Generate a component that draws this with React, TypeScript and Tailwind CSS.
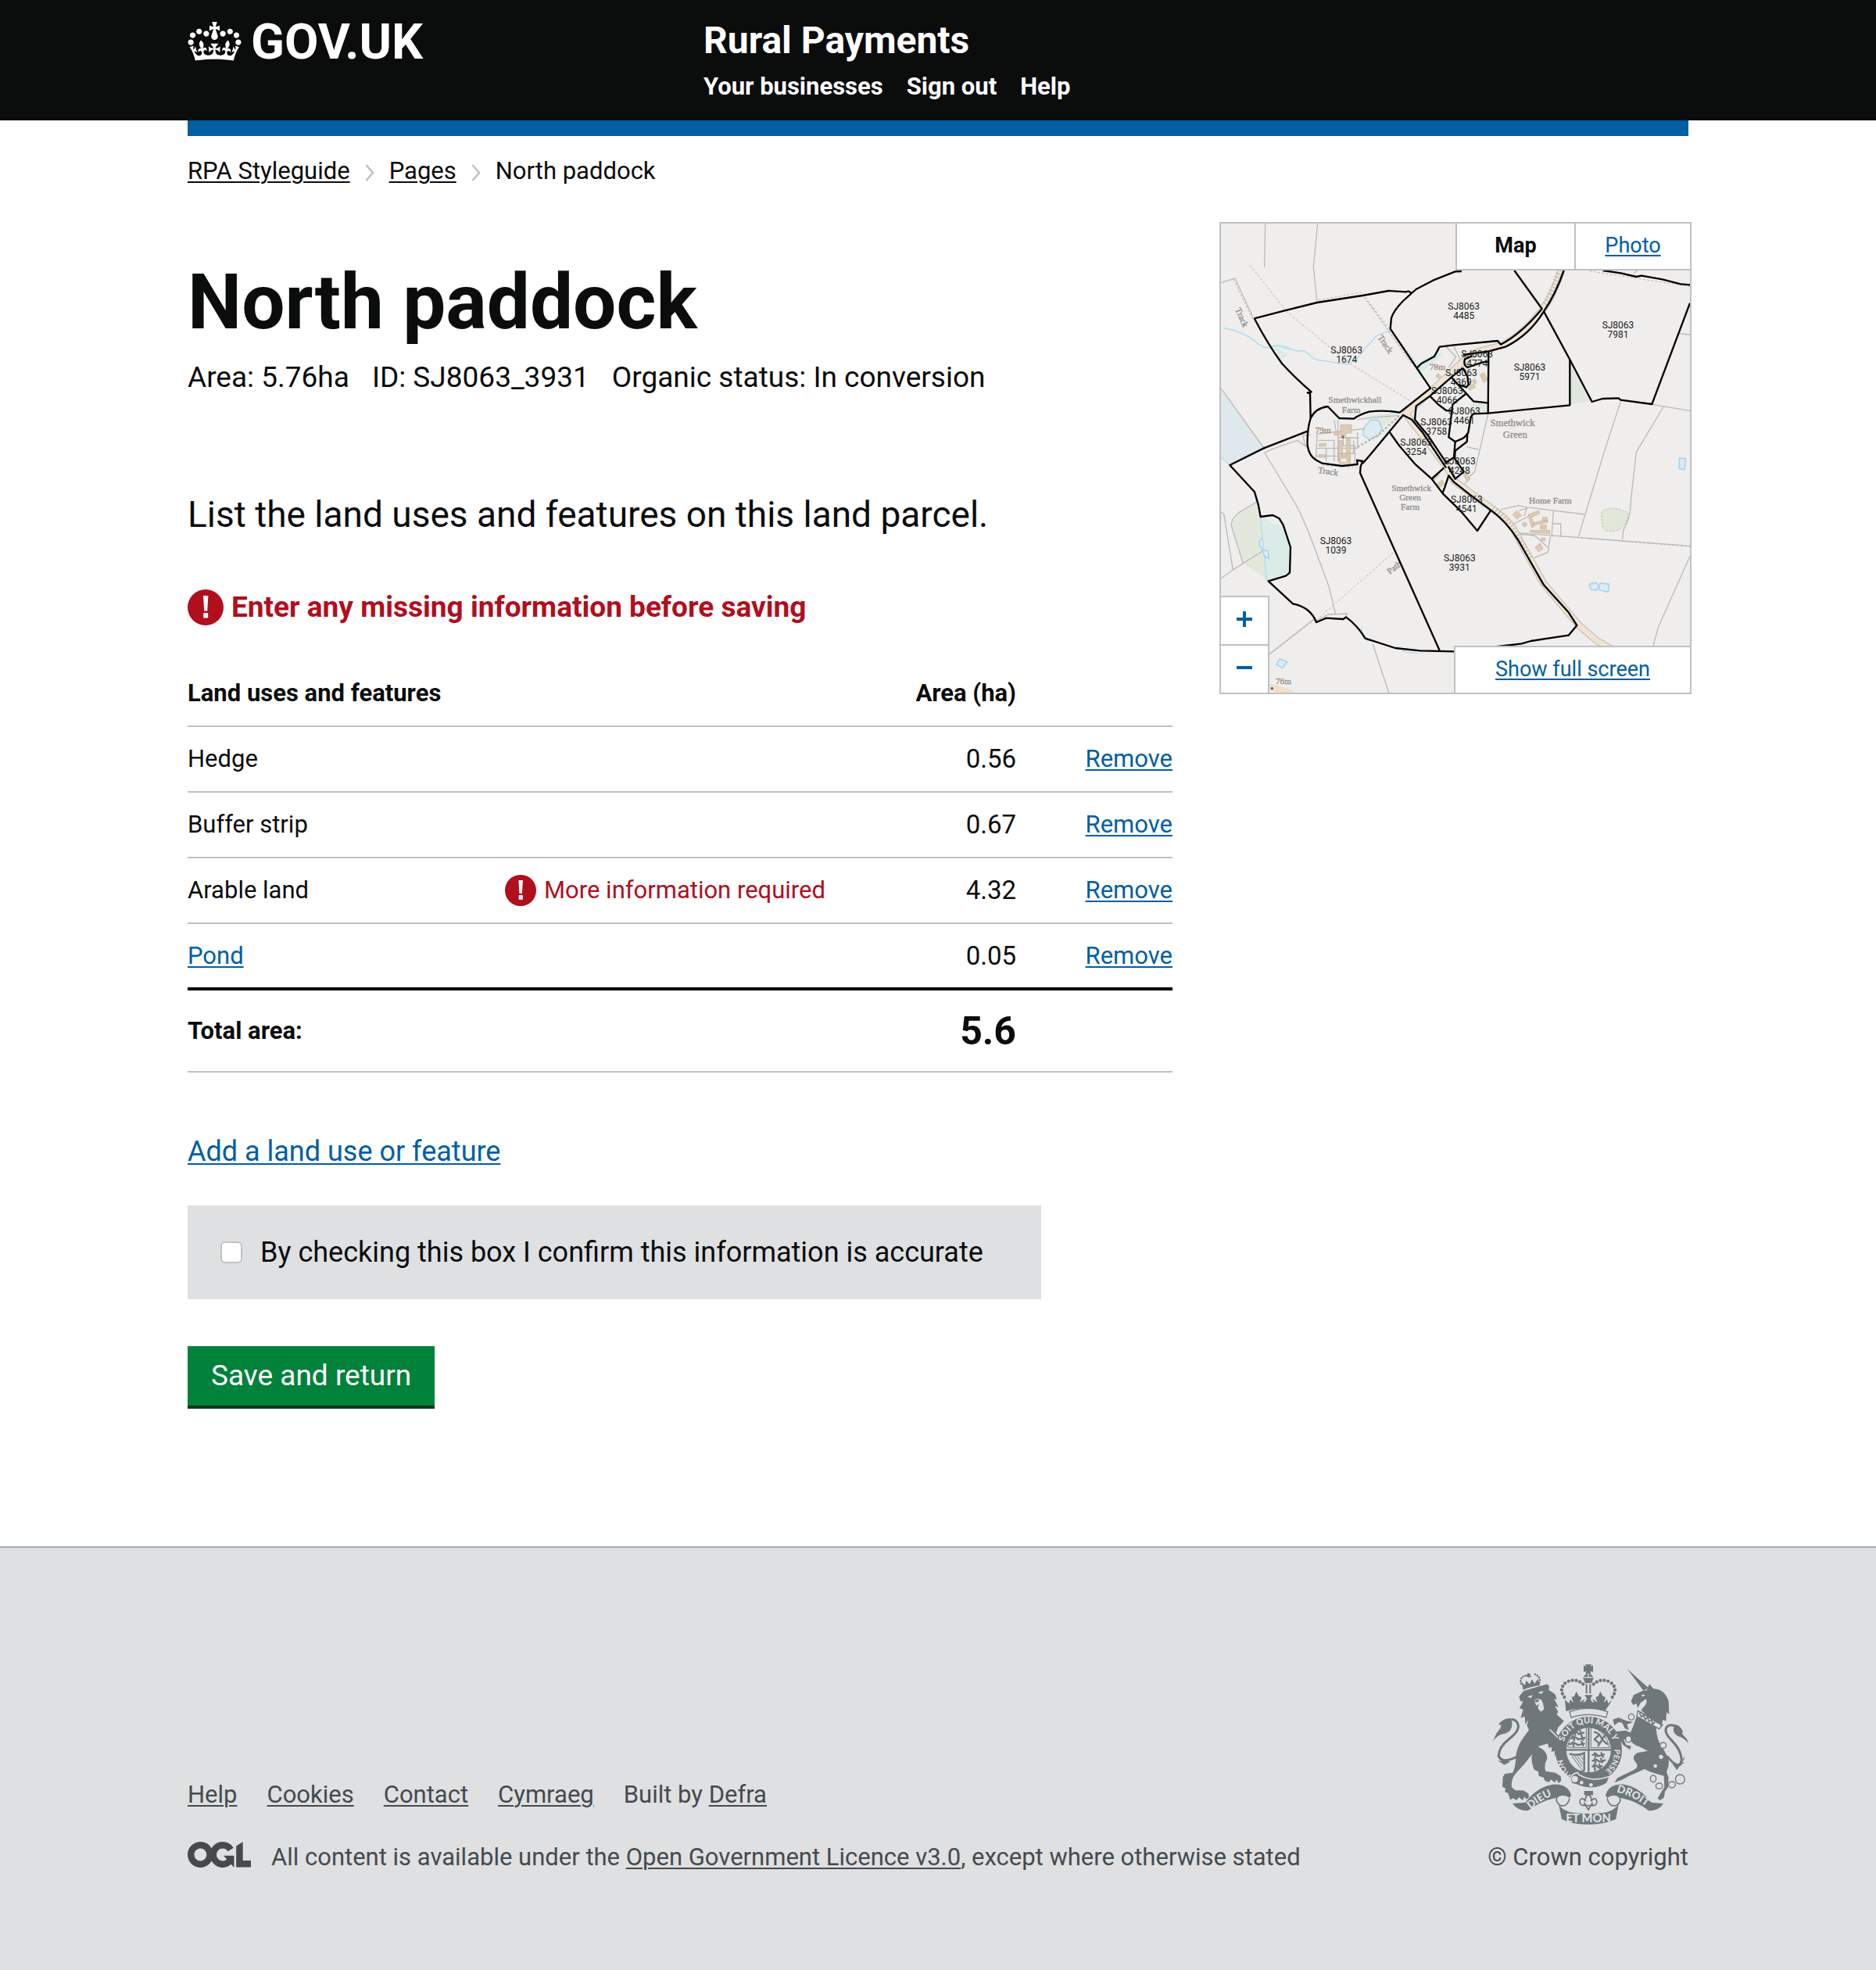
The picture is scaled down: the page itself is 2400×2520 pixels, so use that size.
import React from "react";

const UNDERLINE = "underline decoration-2 underline-offset-[3px]";
const LINK = "text-[#005ea5] underline decoration-2 underline-offset-[3px]";

const CROWN =
  "M25 30.2c3.5 1.5 7.7-.2 9.1-3.7 1.5-3.6-.2-7.8-3.9-9.2-3.6-1.4-7.6.3-9.1 3.9-1.4 3.5.3 7.5 3.9 9zM9 39.5c3.6 1.5 7.8-.2 9.2-3.7 1.5-3.6-.2-7.8-3.9-9.1-3.6-1.5-7.6.2-9.1 3.8-1.4 3.5.3 7.5 3.8 9zM4.4 57.2c3.5 1.5 7.7-.2 9.1-3.8 1.5-3.6-.2-7.7-3.9-9.1-3.5-1.5-7.6.3-9.1 3.8-1.4 3.5.3 7.6 3.9 9.1zm38.3-21.4c3.5 1.5 7.7-.2 9.1-3.8 1.5-3.6-.2-7.7-3.9-9.1-3.6-1.5-7.6.3-9.1 3.8-1.3 3.6.4 7.7 3.9 9.1zm64.4-5.6c-3.6 1.5-7.8-.2-9.1-3.7-1.5-3.6.2-7.8 3.8-9.2 3.6-1.4 7.7.3 9.2 3.9 1.3 3.5-.4 7.5-3.9 9zm15.9 9.3c-3.6 1.5-7.7-.2-9.1-3.7-1.5-3.6.2-7.8 3.7-9.1 3.6-1.5 7.7.2 9.2 3.8 1.5 3.5-.3 7.5-3.8 9zm4.7 17.7c-3.6 1.5-7.8-.2-9.2-3.8-1.5-3.6.2-7.7 3.9-9.1 3.6-1.5 7.7.3 9.2 3.8 1.3 3.5-.4 7.6-3.9 9.1zM89.3 35.8c-3.6 1.5-7.8-.2-9.2-3.8-1.4-3.6.2-7.7 3.9-9.1 3.6-1.5 7.7.3 9.2 3.8 1.4 3.6-.3 7.7-3.9 9.1zM69.7 17.7l8.9 4.7V9.3l-8.9 2.8c-.2-.3-.5-.6-.9-.9L72.4 0H59.6l3.5 11.2c-.3.3-.6.5-.9.9l-8.8-2.8v13.1l8.8-4.7c.3.3.6.7.9.9l-5 15.4v.1c-.2.8-.4 1.6-.4 2.4 0 4.1 3.1 7.5 7 8.1h.2c.3 0 .7.1 1 .1.4 0 .7 0 1-.1h.2c4-.6 7.1-4.1 7.1-8.1 0-.8-.1-1.7-.4-2.4V34l-5.1-15.4c.4-.2.7-.6 1-.9zM66 92.8c16.9 0 32.8 1.1 47.1 3.2 4-16.9 8.9-26.7 14-33.5l-9.6-3.4c1 4.9 1.1 7.2 0 10.2-1.5-1.4-3-4.3-4.2-8.7L108.6 76c2.8-2 5-3.2 7.5-3.3-4.4 9.4-10 11.9-13.6 11.2-4.3-.8-6.3-4.6-5.6-7.9 1-4.7 5.7-5.9 8-.5 4.3-8.7-3-11.4-7.6-8.8 7.1-7.2 7.9-13.5 2.1-21.1-8 6.1-8.1 12.3-4.5 20.8-4.7-5.4-12.1-2.5-9.5 6.2 3.4-5.2 7.9-2 7.2 3.1-.6 4.3-6.4 7.8-13.5 7.2-10.3-.9-10.9-8-11.2-13.8 2.5-.5 7.1 1.8 11 7.3L80.2 60c-4.1 4.4-8 5.3-12.3 5.4 1.4-4.4 8-11.6 8-11.6H55.5s6.4 7.2 7.9 11.6c-4.2-.1-8-1-12.3-5.4l1.4 16.4c3.9-5.5 8.5-7.7 10.9-7.3-.3 5.8-.9 12.8-11.1 13.8-7.2.6-12.9-2.9-13.5-7.2-.7-5 3.8-8.3 7.1-3.1 2.7-8.7-4.6-11.6-9.4-6.2 3.7-8.5 3.6-14.7-4.6-20.8-5.8 7.6-5 13.9 2.2 21.1-4.7-2.6-11.9.1-7.7 8.8 2.3-5.5 7.1-4.2 8.1.5.7 3.3-1.3 7.1-5.7 7.9-3.5.7-9-1.8-13.5-11.2 2.5.1 4.7 1.3 7.5 3.3l-4.7-15.4c-1.2 4.4-2.7 7.2-4.3 8.7-1.1-3-.9-5.3 0-10.2l-9.5 3.4c5 6.9 9.9 16.7 14 33.5 14.8-2.1 30.8-3.2 47.7-3.2z";

function ErrorIcon({ className }: { className: string }) {
  return (
    <svg viewBox="0 0 46 46" className={className} aria-hidden="true">
      <circle cx="23" cy="23" r="23" fill="#b10e1e" />
      <path d="M20 8h6.4l-1.2 19.5h-4z" fill="#fff" />
      <rect x="20.2" y="30" width="6" height="6.4" rx="1" fill="#fff" />
    </svg>
  );
}

function Chevron() {
  return (
    <svg viewBox="0 0 12 22" className="mt-1 h-[22px] w-3" fill="none" stroke="#bfc1c3" strokeWidth="2.6" aria-hidden="true">
      <path d="M1.5 1 10 11 1.5 21" />
    </svg>
  );
}

const PARCELS: [string, number, number][] = [
  ["1674", 518, 545], ["4485", 968, 377], ["7981", 1560, 449], ["5971", 1221, 613],
  ["4774", 1019, 562], ["4369", 958, 634], ["4066", 904, 702], ["4461", 970, 780],
  ["3758", 863, 822], ["3254", 785, 901], ["4248", 952, 971], ["4541", 979, 1118],
  ["1039", 477, 1278], ["3931", 952, 1343],
];

const ROAD =
  "M1345 220Q1310 330 1265 385 1190 480 1110 517L1040 535Q1000 545 960 582L850 685 745 778 905 985 930 1035 1080 1145Q1150 1190 1180 1260L1275 1430 1410 1590 1480 1650 1570 1700";

function ParcelMap() {
  return (
    <svg viewBox="36 48 1800 1800" className="block h-auto w-full bg-[#efeeec]" role="img" aria-label="Map of land parcels around North paddock">
      {/* water and vegetation */}
      <path d="M36 680 200 905 70 975 36 945z" fill="#dfe8ec" />
      <path d="M36 1154 44 1158 52 1200 36 1180z" fill="#e6eaec" />
      <path d="M172 1116 188 1174 213 1415 120 1350 75 1205q5-30 30-48z" fill="#e2e8dc" />
      <path d="M190 1174q30 8 42 26l43 5 28 85-3 98-15 12-72 20z" fill="#dbebe7" />
      <path d="M1377 590 1455 730 1377 742z" fill="#e0e7dc" />
      <path d="M998 733 1061 738 1061 776 1010 776 992 760z" fill="#e0e7dc" />
      <path d="M560 800q60-25 150-22l-75 80q10-40-10-58z" fill="#e2e8dc" />
      <path d="M790 602 810 570 860 545 885 542 885 555 840 590 790 625z" fill="#d6eae6" />
      <path d="M235 515q40-12 80 15l-20 8-45-15 45 30-30 15z" fill="#d9ebe7" />
      <path d="M1500 1150q40-22 98 8 0 45-35 65-40 15-60-5-12-40-3-68z" fill="#e1e8da" stroke="#b4bcae" strokeWidth="3" strokeDasharray="7 6" />
      <g fill="none" stroke="#b8def0" strokeWidth="5">
        <path d="M44 448q60 12 100 35 55 45 75 42 25-12 50-7l60 20q25-8 45 12 20 25 50 23 50 10 100 15 35-15 60-55l50-55 50-20" />
        <path d="M188 1174 200 1300 212 1420" />
        <path d="M36 945 70 975" />
        <path d="M575 1600q0 50 40 50M730 1688l60 10" />
        <path d="M1405 1595 1460 1640 1500 1665" />
      </g>
      <g fill="#dcebf2" stroke="#a8d6ee" strokeWidth="5">
        <path d="M582 835 610 802 640 802 654 835 640 862 605 877 582 860z" />
        <path d="M262 1718 290 1730 272 1754 248 1740z" />
        <path d="M193 1255q-18 15-8 30l12 15M195 1300l22 5 3 28-15-6z" />
        <path d="M1450 1432 1475 1425 1487 1440 1477 1455 1455 1452zM1487 1440 1492 1428 1525 1432 1522 1462 1490 1455z" />
        <path d="M1795 948 1820 950 1815 992 1795 990z" />
      </g>

      {/* field boundaries */}
      <g fill="none" stroke="#bcbbb9" strokeWidth="4">
        <path d="M206 48 203 215M407 48 391 215 405 348M36 275 90 258 160 410" />
        <path d="M36 680 205 915M200 930q20-15 130-50l35 25M205 930 320 1120Q360 1190 420 1360L450 1440 476 1548" />
        <path d="M402 1572 448 1548 520 1545 516 1556M172 1116 105 1157Q75 1180 75 1205L120 1350M36 1410 80 1378 195 1305M36 1154 48 1165 82 1378" />
        <path d="M222 1700 400 1560M618 1660 680 1848" />
        <path d="M1570 730 1505 930 1408 1250M1735 750 1630 925 1608 1120Q1610 1170 1580 1225L1577 1260M1690 742 1836 766M1795 470 1836 474M1620 240 1640 222" />
        <path d="M1836 1325 1715 1595 1695 1668M1110 1145 1180 1130 1200 1135 1432 1164M1312 1152 1305 1250M1340 1245V1200H1310M1175 1235 1836 1285" />
        <path d="M1061 778 1010 1000 990 1020 970 1050M980 905 1025 915" />
        <path d="M900 520 938 560 910 600M930 520 955 570M405 855 590 835M405 855 400 960M485 800V960M400 910H560V850M530 870V960M485 870H565M560 800 640 790 720 785M380 860H350L360 905" />
        <path d="M410 880H470V960M440 910V960M505 850V900H550M545 880V930H500M400 940H480M550 900V970M470 800 480 860" />
        <path d="M1150 1205 1220 1170M1180 1240 1240 1245 1290 1290M1240 1330 1290 1310M1180 1150 1210 1140 1200 1170M1300 1250 1290 1310 1230 1335" />
      </g>
      <g fill="none" stroke="#b9b7b5" strokeWidth="3" strokeDasharray="9 7">
        <path d="M147 208 290 388 530 585 765 730M84 262 160 420M410 342 575 312 838 680M600 345 800 600M585 330 770 590" />
        <path d="M425 975 560 985M402 1570 700 1308M225 1700 400 1565M1450 230 1836 290M1305 1245 1836 1288" />
        <path d="M560 905 640 860 720 785" strokeWidth="8" />
      </g>

      {/* roads */}
      <g fill="none" strokeLinejoin="round">
        <path d={ROAD} stroke="#c4c0bb" strokeWidth="28" />
        <path d={ROAD} stroke="#efe3d2" strokeWidth="21" />
        <path d="M1335 225Q1310 310 1275 360M1080 1140Q1140 1180 1180 1260L1225 1330" stroke="#b9b4ae" strokeWidth="22" strokeDasharray="3 11" />
        <path d="M222 1825 310 1852" stroke="#efe0cb" strokeWidth="26" />
      </g>

      {/* buildings */}
      <g fill="#dccab2" stroke="#c2b199" strokeWidth="2">
        <path d="M495 820h42v32h-22v12h-20zM470 848h20v12h-20zM488 880h14v75h-14zM518 870h14v85h-14zM488 930h44v38h-44zM412 892h28v10h-28zM412 935h26v10h-26z" />
        <path d="M870 622l10 12-10 10-10-12zM1000 650l10-6 8 14-10 6zM1030 628l16-8 14 28-16 10zM985 672l22-10 6 14-24 12zM845 1022l22-20 8 10-22 22zM862 1050l22-18 10 14-24 20zM965 1010l12-8 16 26-12 10z" />
        <path d="M1155 1165 1172 1150 1190 1168 1172 1183zM1190 1202l12-10 10 10-10 12zM1215 1165 1255 1150 1260 1160 1228 1175 1240 1210 1228 1215zM1235 1195 1290 1185V1195L1235 1205zM1270 1175H1288V1190H1270zM1222 1225H1298V1238L1222 1232zM1262 1205H1285V1220H1262zM1265 1255 1280 1255 1280 1265 1265 1265zM1242 1290 1260 1275 1272 1295 1255 1308z" />
      </g>
      <path d="M496 950h22v12h-22z" fill="#efeeec" />
      <circle cx="504" cy="867" r="5" fill="#8a5a50" />
      <circle cx="232" cy="1832" r="5" fill="#6b5a50" />

      {/* place names */}
      <g fill="#929090" fontFamily="'Liberation Serif', serif" fontSize="34" textAnchor="middle" stroke="#929090" strokeWidth="1">
        <text x="550" y="735">Smethwickhall</text>
        <text x="536" y="774">Farm</text>
        <text x="1155" y="825" fontSize="38">Smethwick</text>
        <text x="1165" y="871" fontSize="38">Green</text>
        <text x="767" y="1074">Smethwick</text>
        <text x="762" y="1110">Green</text>
        <text x="762" y="1146">Farm</text>
        <text x="1300" y="1122">Home Farm</text>
        <text x="447" y="1010" transform="rotate(8 447 1000)">Track</text>
        <text x="117" y="420" transform="rotate(66 117 408)">Track</text>
        <text x="668" y="522" transform="rotate(55 668 510)">Track</text>
        <text x="702" y="1380" transform="rotate(-38 700 1370)">Path</text>
        <g fill="#a38d86" stroke="#a38d86">
          <text x="428" y="851">79m</text>
          <text x="867" y="609">78m</text>
          <text x="276" y="1816">76m</text>
        </g>
      </g>

      {/* parcel outlines */}
      <g fill="none" stroke="#000" strokeWidth="7" strokeLinejoin="round">
        <path d="M164 412 280 382 405 351 580 324 680 306 745 310 757 308 768 315 785 300 850 266 935 232 960 231" />
        <path d="M768 315 735 345Q700 380 690 410L686 452 840 680 722 773Q660 762 605 770 570 780 545 797L490 795 446 750Q400 755 380 795L378 700 368 697 383 694Q320 640 270 585 215 510 164 412" />
        <path d="M380 795Q366 840 368 900 375 940 400 955L425 968 500 978 560 972 558 956 580 960 572 980 570 1005 875 1686M580 968 605 940 735 783 768 800 810 850 900 985" />
        <path d="M368 845 200 910 70 975 165 1078 180 1130 188 1173 235 1167 260 1180 275 1205 303 1290 300 1388 285 1400 218 1420 312 1507Q380 1520 402 1578L440 1562 505 1566 516 1558Q560 1590 590 1640L705 1677 800 1687 930 1690 1125 1668 1190 1660 1225 1650 1290 1640 1370 1628 1402 1590 1370 1540 1275 1435 1175 1260Q1130 1190 1075 1150L990 1087 930 1040 910 1015 895 1060 886 1083" />
        <path d="M683 848 720 900 780 970 845 1028 888 1085 955 1150 1020 1227 1072 1148M845 1028 892 985" />
        <path d="M790 600 805 585 855 558 875 521 930 514 1098 498 1110 512Q1190 470 1268 375L1162 228" />
        <path d="M965 552 1063 538 1130 520Q1220 475 1275 385 1320 320 1352 228" />
        <path d="M1275 385 1375 570 1460 732 1500 720 1562 718 1570 725 1690 741 1836 353M1502 228 1570 238 1630 252 1650 248 1730 262 1800 280 1836 283" />
        <path d="M1063 538 1061 776 1375 745V570" />
        <path d="M1061 776 1005 778 995 790 985 850Q975 865 965 872L935 885 910 868 925 742 975 702" />
        <path d="M965 602 920 638 838 710 785 748 780 800 830 860 900 965 930 945 935 885M838 710 870 742 900 765 925 767" />
        <path d="M965 602 982 635 986 665 978 676 948 666M922 640 1005 730 1060 736M1065 578 1040 580 982 600Q965 590 972 568L1000 556" />
        <path d="M982 852 980 885 935 920 933 950 968 1000 935 1028 908 980" />
      </g>

      {/* parcel numbers */}
      <g fill="#1c1c1c" fontFamily="Roboto, 'Liberation Sans', sans-serif" fontSize="36" textAnchor="middle">
        {PARCELS.map(([id, x, y]) => (
          <text key={id} x={x} y={y}>
            <tspan>SJ8063</tspan>
            <tspan x={x} dy="36">{id}</tspan>
          </text>
        ))}
      </g>
    </svg>
  );
}

function RoyalArms() {
  const bg = "#dee0e2";
  return (
    <svg viewBox="90 58 750 615" className="h-[205px] w-[250px]" fill="#6f777b" role="img" aria-label="Royal coat of arms">
      {/* lion */}
      <path d="M190 182 208 160 240 150 298 134 306 142 304 156 328 172 336 194 324 190 342 222 328 218 340 240 334 250 350 264 362 276 340 300 332 322 350 338 362 372 364 412 352 402 348 418 338 402 328 410 326 390 314 394 316 376 304 378 300 362 262 374Q300 390 298 420 284 444 292 468L330 474 350 488 352 504 342 514 334 500 328 512 312 500 306 510 290 506 284 492 266 486 264 470 248 462Q234 430 240 402 214 440 178 476 158 500 162 530L176 542 206 542 226 554 228 568 218 576 210 566 204 580 190 568 180 580 168 572 156 578 148 552 136 548 138 534 126 528 128 490 136 478 166 474Q178 450 178 408 184 370 206 340L228 310 220 292 226 270 214 288 212 258 196 264 206 232 192 226 206 200 196 200z" />
      <path d="M222 182l20-6-6 12zM262 166l22-6-8 12zM248 196l12-6 16 4 6 14 4 22-12 10-12-14 4-14-10 4z" fill={bg} />
      <path d="M246 200l14-8 8 4-8 8z" />
      <path d="M308 308l44 44" stroke={bg} strokeWidth="5" />
      <path d="M180 414Q124 440 112 410 112 376 150 346 190 316 187 292 180 268 160 270" fill="none" stroke="#6f777b" strokeWidth="9" />
      <path d="M166 266q-34-6-56 24 16-4 8 14-16 16-28 50 14-22 36-28 30-4 36-28 4-20-4-32zM106 404q4 20 20 26l-18-2 20 12 4 4 24-12-28-10z" />
      {/* lion crown */}
      <path d="M204 148 200 126 212 138 218 120 230 134 240 116 250 132 262 114 268 130 270 140Q236 142 206 156zM216 100l6-4 2-6 6 4 6 2-4 4 6 6-10 2-6-2z" />
      <path d="M198 132q-8-26 22-32M268 128q8-24-22-34" fill="none" stroke="#6f777b" strokeWidth="8" strokeDasharray="0 10" strokeLinecap="round" />
      {/* unicorn */}
      <path d="M605 75 686 148 668 160z" />
      <path d="M620 200 630 176 664 160 680 158 690 134 706 152Q748 152 764 200L766 250 756 242 754 276 742 270 738 290 690 262 658 234 668 222Q684 208 678 190L656 206 646 226 640 208 628 214z" />
      <path d="M640 262 654 238 744 290 728 308 716 302Q718 350 742 380L762 416Q770 440 756 470L764 492 762 530 750 546 746 570 730 580 722 572 736 548 748 530 746 486Q690 472 672 460L612 486 588 500 556 512 568 494 630 464Q654 450 636 432 620 412 644 398L684 390 652 374Q622 366 616 344L592 346 600 366 620 372 616 386 590 368 572 340 562 316 600 312 618 320 628 296z" />
      <path d="M628 280 604 288 612 310 596 304 586 282 572 280 556 292 550 270 572 262 600 274z" />
      <path d="M658 178q8-6 16-2l-6 6z" fill={bg} />
      <path d="M646 236 738 292 728 306 642 258z" fill={bg} stroke="#6f777b" strokeWidth="4" />
      <path d="M652 244l8 16 8-8 6 18 10-10 4 18 12-8 2 18 10-8" fill="none" stroke="#6f777b" strokeWidth="5" />
      <path d="M758 410Q806 470 814 424 812 386 776 350 744 318 756 300 766 286 786 294" fill="none" stroke="#6f777b" strokeWidth="9" />
      <path d="M770 290q36-10 50 28-8 0 0 12 14 8 20 32-18-24-40-28-26-16-14-42zM778 440q20 4 34-4 14-10 14-26l-14 26 14-4-22 20-8 12z" />
      <g fill={bg} stroke="#6f777b" strokeWidth="4">
        <ellipse cx="621" cy="260" rx="11" ry="12" />
        <ellipse cx="610" cy="345" rx="11" ry="12" />
        <ellipse cx="743" cy="369" rx="12" ry="11" />
        <ellipse cx="705" cy="497" rx="11" ry="13" />
        <ellipse cx="728" cy="525" rx="13" ry="11" />
        <ellipse cx="777" cy="520" rx="13" ry="12" />
        <circle cx="808" cy="499" r="18" />
      </g>
      <circle cx="735" cy="413" r="8" fill={bg} />
      <circle cx="713" cy="448" r="7" fill={bg} />
      {/* crown */}
      <path d="M438 62l10 4-4-8h24l-4 8 10-4v26l-10-4 2 10h-20l2-10-10 4zM436 112q2-16 20-18 18 2 20 18l-8 18h-24z" />
      <path d="M436 108h40M456 94v14" stroke={bg} strokeWidth="4" />
      <path d="M446 134h6v36h-6zM460 134h6v36h-6z" />
      <path d="M364 184Q340 150 372 126 412 108 440 138M548 184Q572 150 540 126 500 108 472 138" fill="none" stroke="#6f777b" strokeWidth="13" strokeDasharray="0 15" strokeLinecap="round" />
      <path d="M366 194l16 14 4-16 12 14-6-22 10-4 8-18 10 18 10 4-6 20 18-14-6 16 10-6 4-10-8-14h30l-8 14 4 10 10 6-6-16 18 14-6-20 10-4 8-18 10 18 10 4-6 22 12-14 4 16 16-14-28 44q-74-22-150 0z" />
      <path d="M384 240q72-26 146 0l-6 22q-70-22-134 0z" fill={bg} stroke="#6f777b" strokeWidth="4" />
      {/* garter and shield */}
      <circle cx="457" cy="387" r="107" fill="none" stroke="#6f777b" strokeWidth="42" />
      <circle cx="457" cy="387" r="87" fill={bg} stroke="#6f777b" strokeWidth="3" />
      <path d="M457 290V490M368 386H546" stroke="#6f777b" strokeWidth="7" />
      <path d="M376 376Q384 320 440 300L448 298V378zM466 298Q520 310 538 378H466z" fill="none" stroke="#6f777b" strokeWidth="3" />
      <g stroke="#6f777b" strokeWidth="7" fill="none" strokeLinecap="round">
        <path d="M398 322l14-4 8 8 18-6M390 342l16-4 12 8 24-6M384 364l20-4 12 8 24-6M402 314l4 16M424 312l6 16M398 334l4 16M430 332l6 16M396 356l4 16M430 354l6 16" />
        <path d="M472 406l14-4 8 8 22-6M472 428l16-4 12 8 20-6M472 450l14-4 10 8 12-6M480 398l4 16M506 398l6 16M480 420l4 16M504 420l6 14M478 442l4 22M498 442l4 16" />
        <path d="M480 318q18 4 26 22 8 16 24 24M496 330l-16 16 16 14M508 344l14-14M506 352l-12 18" />
        <path d="M386 402q30 8 54-4v66q-14 10-26 6" />
      </g>
      <path d="M392 408l38 54M402 408l30 42M412 408l22 30M424 406l12 18" stroke="#6f777b" strokeWidth="3" />
      <g fill={bg} fontFamily="Lato, 'Liberation Sans', sans-serif" fontWeight="900" fontSize="33">
        <path id="garter-top" d="M363 356A98 98 0 0 1 555 374" fill="none" />
        <text><textPath href="#garter-top">SOIT QUI MAL Y</textPath></text>
        <path id="garter-right" d="M556 384A98 98 0 0 1 510 474" fill="none" />
        <text fontSize="30"><textPath href="#garter-right">PENSE</textPath></text>
        <path id="garter-left" d="M390 484A98 98 0 0 1 357 408" fill="none" />
        <text fontSize="30"><textPath href="#garter-left">HON</textPath></text>
      </g>
      <path d="M386 496q10-22 30-22l4 8q50 30 118 6l-10 26q-50 34-118 6l-18-4z" stroke={bg} strokeWidth="5" />
      <circle cx="404" cy="498" r="12" fill={bg} />
      <circle cx="430" cy="512" r="7" fill={bg} />
      <circle cx="466" cy="521" r="7" fill={bg} />
      {/* motto scroll */}
      <path d="M440 544h34v16h-34z" />
      <path d="M456 556q-16 14-10 28-14-20-22-4-2 16 10 20 8-2 8-8l14 24 14-24q0 6 8 8 12-4 10-20-8-16-22 4 6-14-10-28zM438 600h38" fill={bg} stroke="#6f777b" strokeWidth="5" />
      <path d="M165 592 214 588Q260 528 318 519 380 516 390 562L380 574Q340 562 326 572 270 584 224 620 184 620 165 592z" />
      <path d="M744 592 698 588Q650 528 594 519 532 516 522 562L532 574Q572 562 586 572 642 584 688 620 728 620 744 592z" />
      <path d="M384 572q-8 34-34 28-24-16-14-32 14-14 34-6M528 572q8 34 34 28 24-16 14-32-14-14-34-6" fill={bg} stroke="#6f777b" strokeWidth="5" />
      <path d="M342 594q14 28 60 34 54 6 108 0 46-6 62-34l-10 58q-50 22-106 20-60 2-102-20z" />
      <g fill={bg} fontFamily="Lato, 'Liberation Sans', sans-serif" fontWeight="900" fontSize="41">
        <path id="scroll-left" d="M234 614Q280 572 336 556" fill="none" />
        <text><textPath href="#scroll-left">DIEU</textPath></text>
        <path id="scroll-right" d="M564 548Q630 562 692 616" fill="none" />
        <text><textPath href="#scroll-right">DROIT</textPath></text>
        <text x="456" y="664" textAnchor="middle" fontSize="44">ET MON</text>
      </g>
    </svg>
  );
}

function Header() {
  return (
    <header className="bg-[#0b0c0c] text-white">
      <div className="mx-auto flex w-4/5 max-w-[1920px] pb-[23px]">
        <div className="w-[660px] pt-6">
          <a href="#" className="inline-flex items-start gap-3 text-[63px] leading-[60px] font-bold">
            <svg viewBox="0 0 132 97" className="mt-1 h-[50px] w-[69px]" fill="currentColor" aria-hidden="true">
              <path d={CROWN} />
            </svg>
            GOV.UK
          </a>
        </div>
        <div className="pt-7">
          <a href="#" className="block text-5xl leading-[48px] font-bold">Rural Payments</a>
          <nav className="mt-[15px] flex gap-[30px] text-[31px] leading-10 font-bold">
            <a href="#">Your businesses</a>
            <a href="#">Sign out</a>
            <a href="#">Help</a>
          </nav>
        </div>
      </div>
    </header>
  );
}

type Row = { name: string; area: string; missing?: boolean; linked?: boolean };
const ROWS: Row[] = [
  { name: "Hedge", area: "0.56" },
  { name: "Buffer strip", area: "0.67" },
  { name: "Arable land", area: "4.32", missing: true },
  { name: "Pond", area: "0.05", linked: true },
];

function LandTable() {
  return (
    <table className="mt-[45px] w-full table-fixed border-collapse text-[31px] leading-10">
      <colgroup>
        <col className="w-[406px]" />
        <col />
        <col className="w-[180px]" />
        <col className="w-[200px]" />
      </colgroup>
      <thead>
        <tr className="h-[84px] border-b-2 border-[#bfc1c3] text-left">
          <th scope="col" colSpan={2} className="p-0">Land uses and features</th>
          <th scope="col" className="p-0 text-right">Area (ha)</th>
          <td />
        </tr>
      </thead>
      <tbody>
        {ROWS.map((r) => (
          <tr key={r.name} className="h-[84px] border-b-2 border-[#bfc1c3] last:border-b-4 last:border-black">
            <td className="p-0">{r.linked ? <a href="#" className={LINK}>{r.name}</a> : r.name}</td>
            <td className="p-0">
              {r.missing && (
                <span className="flex items-center gap-2.5 text-[#b10e1e]">
                  <ErrorIcon className="h-10 w-10" />
                  More information required
                </span>
              )}
            </td>
            <td className="p-0 text-right text-[33px]">{r.area}</td>
            <td className="p-0 text-right"><a href="#" className={LINK}>Remove</a></td>
          </tr>
        ))}
      </tbody>
      <tfoot>
        <tr className="h-[106px] border-b-2 border-[#bfc1c3] font-bold">
          <th scope="row" colSpan={2} className="p-0 text-left">Total area:</th>
          <td className="p-0 text-right text-[50px]">5.6</td>
          <td />
        </tr>
      </tfoot>
    </table>
  );
}

function MapPanel() {
  return (
    <aside className="relative mt-[45px] -mr-1 w-[604px] shrink-0 border-2 border-[#bfc1c3] text-[27px] leading-[56px]">
      <ParcelMap />
      <div className="absolute top-0 right-0 flex border-b-2 border-l-2 border-[#bfc1c3] bg-white text-center">
        <button type="button" className="w-[150px] pb-0.5 font-bold">Map</button>
        <a href="#" className={`w-[148px] border-l-2 border-[#bfc1c3] pb-0.5 ${LINK}`}>Photo</a>
      </div>
      <div className="absolute bottom-0 left-0 flex w-[62px] flex-col border-t-2 border-r-2 border-[#bfc1c3] bg-white">
        <button type="button" aria-label="Zoom in" className="flex h-[60px] items-center justify-center pb-1">
          <svg viewBox="0 0 20 20" className="size-5" fill="#005ea5"><path d="M8 0h4v8h8v4h-8v8H8v-8H0V8h8z" /></svg>
        </button>
        <button type="button" aria-label="Zoom out" className="flex h-[62px] items-center justify-center border-t-2 border-[#bfc1c3] pb-1">
          <svg viewBox="0 0 20 20" className="size-5" fill="#005ea5"><path d="M0 8h20v4H0z" /></svg>
        </button>
      </div>
      <a href="#" className={`absolute right-0 bottom-0 w-[302px] border-t-2 border-l-2 border-[#bfc1c3] bg-white pb-0.5 text-center ${LINK}`}>Show full screen</a>
    </aside>
  );
}

function Footer() {
  return (
    <footer className="border-t-2 border-[#a1acb2] bg-[#dee0e2] pt-[149px] pb-[124px] text-[31px] leading-10 text-[#454a4c]">
      <div className="mx-auto flex w-4/5 max-w-[1920px] items-end justify-between">
        <div>
          <nav className="mb-10 flex gap-[38px]">
            {["Help", "Cookies", "Contact", "Cymraeg"].map((t) => (
              <a key={t} href="#" className={UNDERLINE}>{t}</a>
            ))}
            <span>
              Built by <a href="#" className={UNDERLINE}>Defra</a>
            </span>
          </nav>
          <div className="flex items-start gap-[26px]">
            <svg viewBox="0 0 483.2 195.7" className="h-[33px] w-[81px]" fill="currentColor" role="img" aria-label="Open Government Licence">
              <path d="M421.5 142.8V.1l-50.7 32.3v161.1h112.4v-50.7zm-122.3-9.6A47.12 47.12 0 0 1 221 97.8c0-26 21.1-47.1 47.1-47.1 16.7 0 31.4 8.7 39.7 21.8l42.7-27.2A97.63 97.63 0 0 0 268.1 0c-36.5 0-68.3 20.1-85.1 49.7A98 98 0 0 0 97.8 0C43.9 0 0 43.9 0 97.8s43.9 97.8 97.8 97.8c36.5 0 68.3-20.1 85.1-49.7a97.76 97.76 0 0 0 149.6 25.4l19.4 22.2h3v-87.8h-80l24.3 27.5zM97.8 145c-26 0-47.1-21.1-47.1-47.1s21.1-47.1 47.1-47.1 47.1 21.1 47.1 47.1S123.8 145 97.8 145" />
            </svg>
            <p>
              All content is available under the{" "}
              <a href="#" className={UNDERLINE}>Open Government Licence v3.0</a>, except where otherwise stated
            </p>
          </div>
        </div>
        <div className="flex shrink-0 flex-col items-end gap-[22px]">
          <RoyalArms />
          <p>© Crown copyright</p>
        </div>
      </div>
    </footer>
  );
}

export default function App() {
  return (
    <div className="bg-white font-['Roboto','Liberation_Sans',sans-serif] text-[#0b0c0c]">
      <Header />
      <div className="mx-auto w-4/5 max-w-[1920px]">
        <div className="h-5 bg-[#005ea5]" />
        <nav aria-label="Breadcrumb" className="mt-[25px] flex items-center gap-[19px] text-[31px] leading-10">
          <a href="#" className={UNDERLINE}>RPA Styleguide</a>
          <Chevron />
          <a href="#" className={UNDERLINE}>Pages</a>
          <Chevron />
          <span>North paddock</span>
        </nav>
        <div className="flex items-start gap-[60px]">
          <main className="min-w-0 flex-1 pb-44">
            <h1 className="mt-[98px] text-[98px] leading-[100px] font-bold">North paddock</h1>
            <div className="mt-[21px] flex gap-[29px] text-[37px] leading-[50px]">
              <span>Area: 5.76ha</span>
              <span>ID: SJ8063_3931</span>
              <span>Organic status: In conversion</span>
            </div>
            <p className="mt-[120px] text-[46px] leading-[60px]">List the land uses and features on this land parcel.</p>
            <p className="mt-[66px] flex gap-2.5 text-[37px] leading-[46px] font-bold text-[#b10e1e]">
              <ErrorIcon className="size-[46px]" />
              Enter any missing information before saving
            </p>
            <LandTable />
            <p className="mt-[76px] text-4xl leading-[50px]">
              <a href="#" className={LINK}>Add a land use or feature</a>
            </p>
            <form onSubmit={(e) => e.preventDefault()} className="mt-11 text-4xl leading-[50px]">
              <label className="flex min-h-[120px] max-w-[1092px] items-center gap-[23px] bg-[#dee0e2] px-[42px]">
                <input type="checkbox" className="size-7 shrink-0 appearance-none rounded-md border-2 border-[#c2c2c2] bg-white" />
                By checking this box I confirm this information is accurate
              </label>
              <button type="submit" className="mt-[60px] block h-20 border-b-4 border-[#003618] bg-[#00823b] px-[30px] text-[37px] text-white">Save and return</button>
            </form>
          </main>
          <MapPanel />
        </div>
      </div>
      <Footer />
    </div>
  );
}
